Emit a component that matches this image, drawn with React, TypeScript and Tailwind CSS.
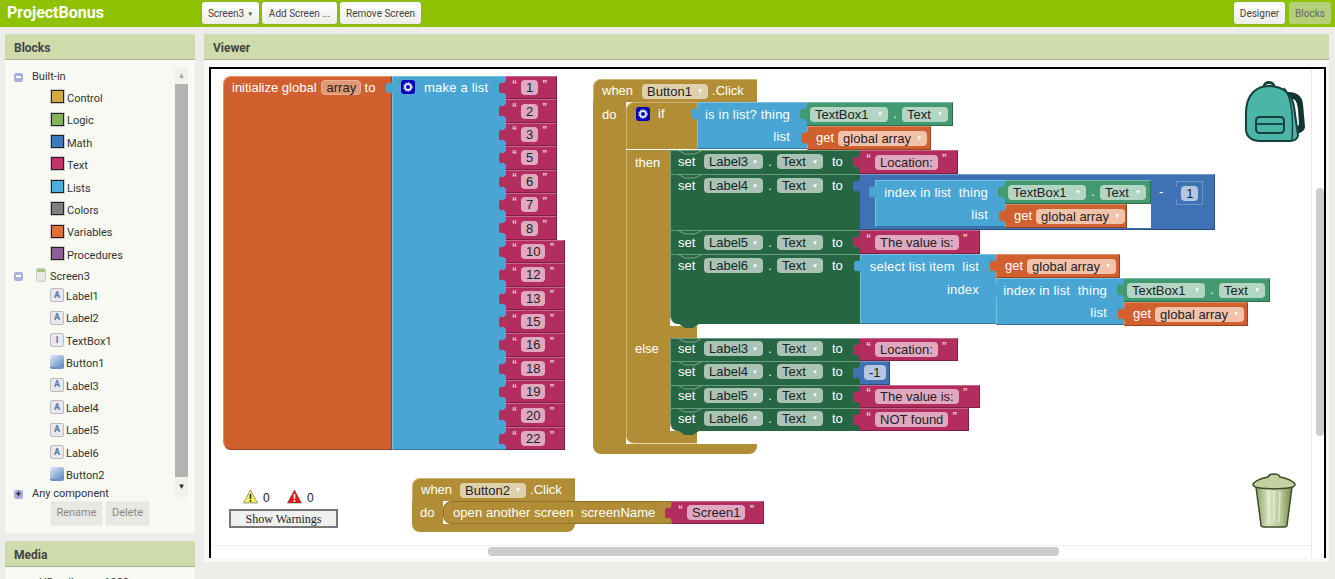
import React from "react";

const K = {
  blue: "bg-[#49a5d4] border-t border-l border-t-[#7cc0e2] border-l-[#7cc0e2] border-b border-b-[#33749a]",
  orange: "bg-[#d0602d] border-t border-l border-t-[#e0906c] border-l-[#e0906c] border-b border-r border-b-[#93431f] border-r-[#93431f]",
  pink: "bg-[#b32d5e] border-t border-t-[#c9668b] border-b border-r border-b-[#7d1f42] border-r-[#7d1f42]",
  green: "bg-[#439a70] border-t border-t-[#79b69a] border-b border-r border-b-[#2f6c4e] border-r-[#2f6c4e]",
  math: "bg-[#3f71b5] border-t border-t-[#789bcb] border-b border-r border-b-[#2c4f7f] border-r-[#2c4f7f]",
} as const;

const PILL = {
  pink: "bg-[#e1a9c0]",
  orange: "bg-[#f3c2ab]",
  orangeDark: "bg-[#e19a77] border border-[#e8b196]",
  green: "bg-[#b2d5c4]",
  dark: "bg-[#a9c3b5]",
  mustard: "bg-[#e0d1ad]",
  math: "bg-[#b4c6e2]",
} as const;

function Tab({ color }: { color: string }) {
  return (
    <svg viewBox="0 0 8 14" className="absolute -left-[7px] top-[4px] h-[14px] w-[8px]">
      <path fill={color} d="M8 0V14C5 14 6 11 3 12C0 13 0 10 0 7C0 4 0 1 3 2C6 3 5 0 8 0Z" />
    </svg>
  );
}

const BLUE = "#49a5d4";
const ORANGE = "#d0602d";
const PINK = "#b32d5e";
const GREEN = "#439a70";
const MATH = "#3f71b5";

function Gear() {
  return (
    <svg viewBox="0 0 14 14" className="h-[14px] w-[14px] shrink-0">
      <rect x="0" y="0" width="14" height="14" rx="3" fill="#0000b8" />
      <circle cx="7" cy="7" r="3" fill="none" stroke="#dfe6ff" strokeWidth="2" />
      <circle cx="7" cy="7" r="4.6" fill="none" stroke="#aab8ee" strokeWidth="1" strokeDasharray="1.5 1.5" />
    </svg>
  );
}

function Pill({ kind, drop, className = "", children }: { kind: keyof typeof PILL; drop?: boolean; className?: string; children: React.ReactNode }) {
  return (
    <span className={`flex h-[15px] shrink-0 items-center justify-between rounded-[4px] px-[5px] text-[13px] leading-none whitespace-pre text-[#222] ${PILL[kind]} ${className}`}>
      {children}
      {drop && <span className="ml-[3px] text-[6px] leading-none text-white">▼</span>}
    </span>
  );
}

function Quote({ c }: { c: string }) {
  return <span className="mb-[6px] text-[10px] leading-none font-bold text-[#f1cfdc]">{c}</span>;
}

function Str({ value, className = "" }: { value: string; className?: string }) {
  return (
    <div className={`relative flex shrink-0 items-center gap-[4px] pl-[6px] ${K.pink} ${className}`}>
      <Tab color={PINK} />
      <Quote c="“" />
      <Pill kind="pink">{value}</Pill>
      <Quote c="”" />
    </div>
  );
}

function Prop() {
  return (
    <div className={`relative flex h-[24px] w-[146px] shrink-0 items-center pl-[3px] text-[13px] text-white ${K.green}`}>
      <Tab color={GREEN} />
      <Pill kind="green" drop className="w-[78px]">TextBox1</Pill>
      <span className="mx-[5px] w-[4px] text-center">.</span>
      <Pill kind="green" drop className="w-[46px]">Text</Pill>
    </div>
  );
}

function Get({ className = "w-[124px]" }: { className?: string }) {
  return (
    <div className={`relative flex h-[24px] shrink-0 items-center gap-[4px] pl-[8px] text-[13px] text-white ${K.orange} ${className}`}>
      <Tab color={ORANGE} />
      get
      <Pill kind="orange" drop className="w-[89px]">global array</Pill>
    </div>
  );
}

function Bump({ top }: { top?: boolean }) {
  return top ? (
    <svg viewBox="0 0 24 4" className="absolute left-[8px] top-0 h-[4px] w-[24px]">
      <path d="M0 0L6 3H16L22 0" fill="none" stroke="#7ea892" strokeWidth="1" />
    </svg>
  ) : (
    <svg viewBox="0 0 24 5" className="absolute left-[8px] top-full h-[5px] w-[24px]">
      <path d="M0 0L6 4H14L20 0Z" fill="#266643" />
    </svg>
  );
}

function SetRow({ label, h = "h-[24px] pt-[3px]", last, children }: { label: string; h?: string; last?: boolean; children: React.ReactNode }) {
  return (
    <div className="flex items-start">
      <div className={`relative flex w-[190px] shrink-0 items-start border-t border-l border-t-[#6d9a83] border-l-[#6d9a83] bg-[#266643] pl-[7px] text-[13px] text-white ${h} ${last ? "rounded-bl-lg" : ""}`}>
        <Bump top />
        {last && <Bump />}
        <span className="w-[26px] leading-[15px]">set</span>
        <Pill kind="dark" drop className="w-[59px]">{label}</Pill>
        <span className="w-[14px] text-center leading-[15px]">.</span>
        <Pill kind="dark" drop className="w-[46px]">Text</Pill>
        <span className="ml-[9px] leading-[15px]">to</span>
      </div>
      {children}
    </div>
  );
}

function IndexInList({ className = "" }: { className?: string }) {
  return (
    <div className={`relative flex h-[47px] shrink-0 flex-col items-end text-[13px] tracking-[0.2px] text-white ${K.blue} ${className}`}>
      <Tab color={BLUE} />
      <span className="flex h-[23px] items-center whitespace-pre">index in list  thing</span>
      <span className="flex h-[23px] items-center">list</span>
    </div>
  );
}

function Tree() {
  const cat: [string, string][] = [
    ["Control", "bg-[#d4a843]"],
    ["Logic", "bg-[#84b356]"],
    ["Math", "bg-[#3f79bd]"],
    ["Text", "bg-[#c5346b]"],
    ["Lists", "bg-[#49afdc]"],
    ["Colors", "bg-[#808080]"],
    ["Variables", "bg-[#df7136]"],
    ["Procedures", "bg-[#8c5f96]"],
  ];
  const comps: [string, string][] = [
    ["Label1", "a"], ["Label2", "a"], ["TextBox1", "t"], ["Button1", "b"], ["Label3", "a"],
    ["Label4", "a"], ["Label5", "a"], ["Label6", "a"], ["Button2", "b"],
  ];
  const row = "flex h-[22.4px] shrink-0 items-center";
  return (
    <div className="flex h-[432px] flex-1 flex-col overflow-hidden pl-[9px] pt-[2px] text-[11px] text-[#333]">
      <div className="flex h-[18px] shrink-0 items-center pb-[2px]">
        <span className="flex h-[9px] w-[9px] items-center justify-center rounded-[2px] bg-[#aab0dd]"><span className="h-[2px] w-[5px] bg-white" /></span>
        <span className="ml-[9px]">Built-in</span>
      </div>
      {cat.map(([n, c]) => (
        <div key={n} className={`${row} pl-[37px]`}>
          <span className={`mb-[3px] h-[13px] w-[13px] border border-[#222] outline outline-[#ccc] ${c}`} />
          <span className="ml-[3px] mt-[2px]">{n}</span>
        </div>
      ))}
      <div className="flex h-[20px] shrink-0 items-center">
        <span className="flex h-[9px] w-[9px] items-center justify-center rounded-[2px] bg-[#aab0dd]"><span className="h-[2px] w-[5px] bg-white" /></span>
        <span className="mb-[2px] ml-[13px] flex h-[14px] w-[10px] flex-col overflow-hidden rounded-[2px] border border-[#ccc] bg-[#e8e8e4]"><span className="h-[3px] bg-[#a8c878]" /></span>
        <span className="ml-[4px] mt-[2px]">Screen3</span>
      </div>
      {comps.map(([n, t]) => (
        <div key={n} className={`${row} pl-[36px]`}>
          {t === "b" ? (
            <span className="mb-[4px] h-[14px] w-[14px] rounded-[2px] border-b-2 border-[#6f8fc0] bg-gradient-to-br from-[#e4ecf6] to-[#5d87c2]" />
          ) : (
            <span className="mb-[4px] flex h-[14px] w-[14px] items-center justify-center rounded-[2px] border border-[#bbb] bg-[#e8e8ee] text-[9px] leading-none font-bold text-[#5577aa]">{t === "a" ? "A" : "I"}</span>
          )}
          <span className="ml-[2px]">{n}</span>
        </div>
      ))}
      <div className="flex h-[14px] shrink-0 items-center">
        <span className="flex h-[9px] w-[9px] items-center justify-center rounded-[2px] bg-[#aab0dd] text-[9px] leading-none font-bold text-[#222]">+</span>
        <span className="ml-[9px]">Any component</span>
      </div>
    </div>
  );
}

function Backpack() {
  return (
    <svg viewBox="0 0 61 64" className="absolute left-[1033px] top-[10px] h-[64px] w-[61px]">
      <path d="M44 14C52 14 57 17 58 25L60 48C60 51 56 53 52 54Z" fill="#12352f" stroke="#12352f" strokeWidth="2" />
      <path d="M48 20C52 20 53 24 54 30L55 46L52 48Z" fill="#fff" />
      <path d="M20 8C20 2 30 2 30 8" fill="none" stroke="#173f3b" strokeWidth="3" />
      <path d="M2 34C2 16 12 7 25 7C38 7 48 14 50 28L54 56C54 60 50 62 46 62H16C8 62 2 58 2 50Z" fill="#4bb5a7" stroke="#173f3b" strokeWidth="2" />
      <path d="M40 9C46 16 50 30 48 62" fill="none" stroke="#173f3b" strokeWidth="1.4" />
      <path d="M12 42C12 39 14 38 16 38H36C39 38 40 39 40 42V50C40 53 38 54 36 54H16C14 54 12 53 12 50Z" fill="#4bb5a7" stroke="#173f3b" strokeWidth="2" />
      <path d="M12 45H40" stroke="#173f3b" strokeWidth="1.8" />
    </svg>
  );
}

function Trash() {
  return (
    <svg viewBox="0 0 44 57" className="absolute left-[1041px] top-[402px] h-[57px] w-[44px]">
      <defs>
        <linearGradient id="tb" x1="0" x2="1" y1="0" y2="0">
          <stop offset="0" stopColor="#8b9d68" />
          <stop offset="0.35" stopColor="#dbe5c2" />
          <stop offset="0.7" stopColor="#b7c795" />
          <stop offset="1" stopColor="#78894f" />
        </linearGradient>
      </defs>
      <path d="M4 16L9 54C9 55 10 56 12 56H32C34 56 35 55 35 54L40 16Z" fill="url(#tb)" stroke="#3f4a28" strokeWidth="1.5" />
      <path d="M16 20L17 51M22 20V51M28 20L27 51" stroke="#eef3df" strokeWidth="1.5" opacity="0.7" />
      <path d="M1 13C4 9 11 7 16 6C17 2 27 2 28 6C33 7 40 9 43 13C43 17 38 17 22 18C6 17 1 17 1 13Z" fill="#c3d1a3" stroke="#3f4a28" strokeWidth="1.5" />
    </svg>
  );
}

function Warn({ fill, mark }: { fill: string; mark: string }) {
  return (
    <svg viewBox="0 0 15 15" className="h-[15px] w-[15px]">
      <path d="M7.5 1L14.5 14H0.5Z" fill={fill} stroke="#555" strokeWidth="0.6" />
      <path d="M7.5 5V10M7.5 11V13" stroke={mark} strokeWidth="1.6" />
    </svg>
  );
}

function ArrayBlock() {
  const vals = ["1", "2", "3", "5", "6", "7", "8", "10", "12", "13", "15", "16", "18", "19", "20", "22"];
  return (
    <div className="absolute left-[12px] top-[7px] flex h-[374px] text-[13px] text-white">
      <div className={`flex w-[169px] shrink-0 items-start rounded-l-lg pl-[8px] pt-[2px] ${K.orange}`}>
        <span className="leading-[18px]">initialize global</span>
        <Pill kind="orangeDark" className="mx-[4px] mt-[1px] w-[40px]">array</Pill>
        <span className="leading-[18px]">to</span>
      </div>
      <div className={`relative flex w-[114px] shrink-0 items-start gap-[9px] pl-[8px] pt-[3px] tracking-[0.2px] ${K.blue}`}>
        <Tab color={BLUE} />
        <Gear />
        <span className="leading-[16px]">make a list</span>
      </div>
      <div className="flex flex-col">
        {vals.map((v) => (
          <Str key={v} value={v} className={`h-[23.4px] ${v.length > 1 ? "w-[59px]" : "w-[51px]"}`} />
        ))}
      </div>
    </div>
  );
}

function Mustard({ className = "", children }: { className?: string; children?: React.ReactNode }) {
  return <div className={`shrink-0 bg-[#b18e35] text-[13px] text-white ${className}`}>{children}</div>;
}

function Button1Block() {
  return (
    <div className="absolute left-[382px] top-[10px] flex flex-col items-start">
      <Mustard className="flex h-[23px] w-[164px] items-center rounded-tl-lg border-t border-l border-[#cdb271] pl-[8px]">
        <span>when</span>
        <Pill kind="mustard" drop className="ml-[9px] w-[66px]">Button1</Pill>
        <span className="ml-[4px]">.Click</span>
      </Mustard>
      <div className="flex items-stretch">
        <Mustard className="w-[33px] pl-[9px] pt-[3px]">do</Mustard>
        <div className="flex flex-col items-start">
          <div className="flex items-start">
            <Mustard className="flex h-[47px] w-[71px] items-start gap-[8px] rounded-tl-lg border-t border-l border-[#cdb271] pl-[9px] pt-[4px]">
              <Gear />
              <span className="leading-[14px]">if</span>
            </Mustard>
            <div className={`relative flex h-[47px] w-[110px] shrink-0 flex-col items-end pr-[17px] text-[13px] tracking-[0.2px] text-white ${K.blue}`}>
              <Tab color={BLUE} />
              <span className="flex h-[23px] items-center">is in list? thing</span>
              <span className="flex h-[23px] items-center">list</span>
            </div>
            <div className="flex flex-col items-start">
              <Prop />
              <Get />
            </div>
          </div>
          <div className="flex items-start">
            <Mustard className="w-[44px] self-stretch border-l border-[#cdb271] pl-[8px] pt-[3px]">then</Mustard>
            <div className="flex flex-col items-start">
              <SetRow label="Label3"><Str value="Location:" className="h-[24px] w-[98px]" /></SetRow>
              <SetRow label="Label4" h="h-[56px] pt-[3px]">
                <div className={`relative flex h-[56px] w-[355px] shrink-0 pl-[15px] pt-[5px] text-[13px] text-white ${K.math}`}>
                  <Tab color={MATH} />
                  <div className="flex items-start">
                    <IndexInList className="w-[130px] pr-[17px]" />
                    <div className="flex w-[146px] flex-col items-start bg-white">
                      <Prop />
                      <Get className="w-[122px]" />
                    </div>
                  </div>
                  <span className="ml-[8px] mt-[2px]">-</span>
                  <div className="relative ml-[13px] mt-[1px] flex h-[24px] w-[27px] items-center justify-center border border-[#6e94c8]">
                    <Tab color={MATH} />
                    <Pill kind="math">1</Pill>
                  </div>
                </div>
              </SetRow>
              <SetRow label="Label5" h="h-[24px] pt-[4px]"><Str value="The value is:" className="h-[24px] w-[120px]" /></SetRow>
              <SetRow label="Label6" h="h-[70px] pt-[3px]" last>
                <div className={`relative flex h-[70px] w-[136px] shrink-0 flex-col items-end pr-[17px] text-[13px] tracking-[0.2px] text-white ${K.blue}`}>
                  <Tab color={BLUE} />
                  <span className="flex h-[23px] items-center whitespace-pre">select list item  list</span>
                  <span className="flex h-[23px] items-center">index</span>
                </div>
                <div className="flex flex-col items-start">
                  <Get />
                  <div className="flex items-start">
                    <IndexInList className="w-[128px] pr-[17px]" />
                    <div className="flex flex-col items-start">
                      <Prop />
                      <Get />
                    </div>
                  </div>
                </div>
              </SetRow>
            </div>
          </div>
          <Mustard className="h-[12px] w-[71px] border-l border-[#cdb271]" />
          <div className="flex items-start">
            <Mustard className="w-[44px] self-stretch border-l border-[#cdb271] pl-[8px] pt-[1px]">else</Mustard>
            <div className="flex flex-col items-start">
              <SetRow label="Label3" h="h-[23.3px] pt-[2px]"><Str value="Location:" className="h-[23.3px] w-[98px]" /></SetRow>
              <SetRow label="Label4" h="h-[23.3px] pt-[2px]">
                <div className={`relative flex h-[23.3px] w-[30px] shrink-0 items-center pl-[4px] ${K.math}`}>
                  <Tab color={MATH} />
                  <Pill kind="math" className="px-[3px]">-1</Pill>
                </div>
              </SetRow>
              <SetRow label="Label5" h="h-[23.3px] pt-[2px]"><Str value="The value is:" className="h-[23.3px] w-[120px]" /></SetRow>
              <SetRow label="Label6" h="h-[23.3px] pt-[2px]" last><Str value="NOT found" className="h-[23.3px] w-[109px]" /></SetRow>
            </div>
          </div>
          <Mustard className="h-[13px] w-[71px] rounded-bl-lg border-l border-b border-l-[#cdb271] border-b-[#e8d9a8]" />
        </div>
      </div>
      <Mustard className="h-[10px] w-[164px] rounded-b-lg" />
    </div>
  );
}

function Button2Block() {
  return (
    <div className="absolute left-[201px] top-[409px] flex flex-col items-start">
      <Mustard className="flex h-[23px] w-[163px] items-center rounded-tl-lg border-t border-l border-[#cdb271] pl-[8px]">
        <span>when</span>
        <Pill kind="mustard" drop className="ml-[8px] w-[66px]">Button2</Pill>
        <span className="ml-[4px]">.Click</span>
      </Mustard>
      <div className="flex items-start">
        <Mustard className="h-[23px] w-[31px] pl-[8px] pt-[2px]">do</Mustard>
        <Mustard className="flex h-[23px] w-[229px] items-center rounded-l-lg border border-[#8f7229] pl-[9px] tracking-[0.07px] whitespace-pre">
          open another screen  screenName
        </Mustard>
        <Str value="Screen1" className="h-[23px] w-[92px]" />
      </div>
      <Mustard className="h-[8px] w-[163px] rounded-b-lg" />
    </div>
  );
}

export default function App() {
  const btn = "flex h-[22px] items-center rounded-[3px] bg-gradient-to-b from-white to-[#ecece8] text-[10px] text-[#444] shadow-[0_0_2px_#888]";
  const head = "flex h-[26px] shrink-0 items-center border-b border-[#a9b292] bg-[#cddcaa] pl-[9px] pt-[2px] text-[12px] font-bold text-[#444]";
  return (
    <div className="flex h-[579px] w-[1335px] flex-col overflow-hidden bg-[#ecece8] font-['Roboto',sans-serif]">
      <header className="flex h-[27px] shrink-0 items-center bg-[#8fc202] pb-[1px]">
        <span className="ml-[7px] w-[195px] text-[16px] font-bold text-white">ProjectBonus</span>
        <div className="flex gap-[3px]">
          <button className={`${btn} w-[57px] justify-center`}>Screen3 <span className="ml-[3px] text-[6px]">▼</span></button>
          <button className={`${btn} w-[75px] justify-center`}>Add Screen ...</button>
          <button className={`${btn} w-[81px] justify-center`}>Remove Screen</button>
        </div>
        <div className="ml-auto mr-[4px] flex gap-[4px]">
          <button className={`${btn} w-[51px] justify-center`}>Designer</button>
          <button className="flex h-[22px] w-[42px] items-center justify-center rounded-[3px] bg-[#b5cf78] text-[10px] text-[#667]">Blocks</button>
        </div>
      </header>
      <main className="flex flex-1 gap-[9px] pl-[5px] pt-[7px]">
        <aside className="flex w-[190px] shrink-0 flex-col gap-[8px]">
          <section className="flex h-[499px] flex-col bg-[#f9f9f4]">
            <div className={head}>Blocks</div>
            <div className="flex pr-[7px] pt-[7px]">
              <Tree />
              <div className="flex h-[430px] w-[13px] shrink-0 flex-col bg-[#f1f1ed] text-[#777]">
                <span className="flex h-[17px] items-center justify-center text-[8px] text-[#aaa]">▲</span>
                <span className="h-[393px] bg-[#b3b3b3]" />
                <span className="flex h-[20px] items-center justify-center text-[8px] text-[#333]">▼</span>
              </div>
            </div>
            <div className="ml-[46px] mt-[3px] flex gap-[4px] text-[11px] text-[#888]">
              <span className="flex h-[23px] w-[51px] items-center justify-center rounded-[3px] bg-[#e8e8e4] shadow-[0_0_1px_#999]">Rename</span>
              <span className="flex h-[23px] w-[43px] items-center justify-center rounded-[3px] bg-[#e8e8e4] shadow-[0_0_1px_#999]">Delete</span>
            </div>
          </section>
          <section className="flex h-[40px] flex-col bg-[#f9f9f4]">
            <div className={head}>Media</div>
            <div className="pl-[34px] pt-[8px] text-[11px] text-[#333]">HDwallpaper 1920x</div>
          </section>
        </aside>
        <section className="flex h-[528px] w-[1125px] shrink-0 flex-col bg-[#f9f9f4]">
          <div className={head}>Viewer</div>
          <div className="px-[5px] pt-[7px] pr-[3px]">
            <div className="relative h-[491px] w-[1117px] overflow-hidden border-x-2 border-t-2 border-black bg-white font-['Liberation_Sans',Arial,sans-serif]">
              <ArrayBlock />
              <Button1Block />
              <Button2Block />
              <div className="absolute left-[18px] top-[420px] flex w-[109px] flex-col items-center text-[12px] text-[#222]">
                <div className="flex h-[20px] w-full items-start pl-[14px]">
                  <Warn fill="#f5f060" mark="#333" />
                  <span className="ml-[5px] w-[24px]">0</span>
                  <Warn fill="#ee1111" mark="#fff" />
                  <span className="ml-[5px]">0</span>
                </div>
                <button className="h-[19px] w-[109px] border-2 border-[#777] bg-[#f0f0f0] font-['Liberation_Serif',serif] text-[12px] leading-none">Show Warnings</button>
              </div>
              <Backpack />
              <Trash />
              <div className="absolute bottom-0 left-0 h-[13px] w-full border-t border-[#eee] bg-white" />
              <div className="absolute right-[1px] top-0 h-full w-[12px] border-l border-[#e8e8f0] bg-white" />
              <div className="absolute left-[1105px] top-[119px] h-[248px] w-[8px] rounded-[4px] bg-[#ccc]" />
              <div className="absolute left-[277px] top-[478px] h-[9px] w-[571px] rounded-[4px] bg-[#ccc]" />
            </div>
          </div>
        </section>
      </main>
    </div>
  );
}
